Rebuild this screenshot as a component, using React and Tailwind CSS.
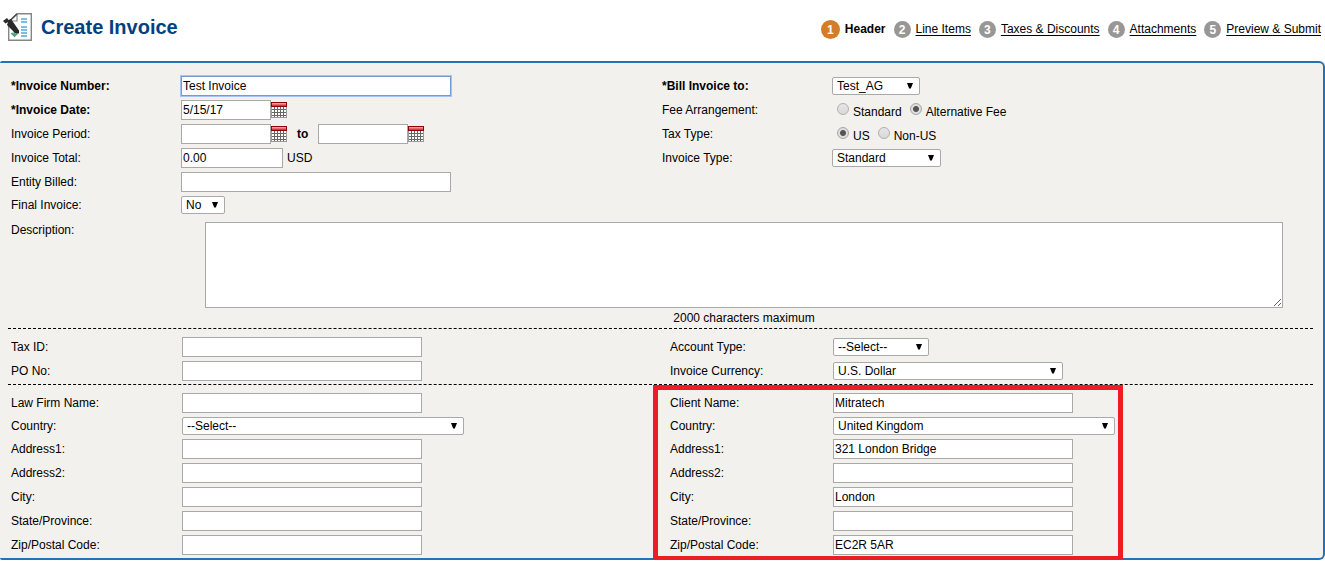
import React from "react";

const fieldBase =
  "block h-5 border bg-white px-px text-xs leading-4 text-black outline-none";

function Row({ id, label, bold, labelWidth = "w-[170px]", short, children }) {
  return (
    <div className={`flex items-center ${short ? "h-[18px]" : "h-5"}`}>
      <label
        htmlFor={id}
        className={`${labelWidth} shrink-0 ${bold ? "font-bold" : ""}`}
      >
        {label}
      </label>
      {children}
    </div>
  );
}

function TextField({ id, width = "w-60", value = "", active }) {
  return (
    <input
      id={id}
      type="text"
      defaultValue={value}
      className={`${fieldBase} ${width} ${
        active ? "border-[#7398dc] ring-1 ring-[#a6c4f5]" : "border-[#a9a9a9]"
      }`}
    />
  );
}

function Select({ id, width, value }) {
  return (
    <div className={`relative ${width}`}>
      <select
        id={id}
        defaultValue={value}
        className="block h-[18px] w-full appearance-none rounded-xs border border-[#a9a9a9] bg-white pr-4 pl-1 text-xs leading-4 text-black outline-none"
      >
        <option>{value}</option>
      </select>
      <svg
        viewBox="0 0 6 6"
        aria-hidden="true"
        className="pointer-events-none absolute top-1.5 right-[7px] size-1.5"
      >
        <path d="M0 0H6L3.8 5.6H2.2Z" fill="#000" />
      </svg>
    </div>
  );
}

function Radio({ name, label, checked }) {
  return (
    <label className="flex items-start gap-1 leading-6">
      <input
        type="radio"
        name={name}
        defaultChecked={checked}
        className="mt-[3px] size-3 appearance-none rounded-full border border-[#b0b0b0] bg-[linear-gradient(#e6e6e6,#d9d9d9)] checked:border-[#a5a5a5] checked:bg-[radial-gradient(circle,#555_0,#555_2.5px,#dedede_3.5px)]"
      />
      {label}
    </label>
  );
}

function CalendarButton({ label }) {
  return (
    <button type="button" aria-label={label} className="block size-4 shrink-0">
      <svg viewBox="0 0 16 16" className="size-4" shapeRendering="crispEdges">
        <rect width="16" height="16" fill="#999" />
        <rect x="1" y="5" width="14" height="10" fill="#fff" />
        <path
          d="M3.5 5V15M6.5 5V15M9.5 5V15M12.5 5V15M1 7.5H15M1 10.5H15M1 13.5H15"
          stroke="#666"
        />
        <rect width="16" height="5" fill="#900008" />
        <rect x="1" y="1" width="14" height="1" fill="#f59a9a" />
        <rect x="1" y="2" width="14" height="1" fill="#e86a6a" />
        <rect x="1" y="3" width="14" height="1" fill="#cf3b3e" />
      </svg>
    </button>
  );
}

function InvoiceIcon() {
  return (
    <svg viewBox="0 0 30 28" aria-hidden="true" className="h-7 w-[30px] shrink-0">
      <path d="M14 .7H28.3V27.3H5.7V9Z" fill="#fff" stroke="#858585" strokeWidth="1.4" />
      <path d="M14 1V8H8" fill="none" stroke="#888" strokeWidth="1.2" />
      <path d="M6 8.5L14 1" stroke="#444" strokeWidth="1.3" />
      <path
        d="M18 6H24M18 9H24M18 14H24M18 17H24M18 20H24M18 23H24"
        stroke="#83bddd"
        strokeWidth="2"
      />
      <path d="M11.500 17V23M8.500 20L11.500 23L14.500 20" fill="none" stroke="#4fa27d" strokeWidth="1.8" />
      <path d="M0 8L4 5L5.500 7L8 6L16 17.500V20.500L12 20L4 12L5 9L2.500 10.500Z" fill="#292929" />
    </svg>
  );
}

const steps = ["Header", "Line Items", "Taxes & Discounts", "Attachments", "Preview & Submit"];

function Steps() {
  return (
    <nav aria-label="Invoice steps">
      <ol className="flex items-center gap-2">
        {steps.map((step, i) => (
          <li key={step} className="flex items-center gap-[5px]">
            <span
              className={`flex items-center justify-center rounded-full font-bold text-white ${
                i === 0 ? "size-[19px] bg-[#d17d2a]" : "size-[17px] bg-[#999696]"
              }`}
            >
              {i + 1}
            </span>
            {i === 0 ? (
              <span aria-current="step" className="pb-0.5 font-bold">{step}</span>
            ) : (
              <a href="#" className="pb-0.5 underline underline-offset-2 [text-decoration-skip-ink:none]">{step}</a>
            )}
          </li>
        ))}
      </ol>
    </nav>
  );
}

function Address({ prefix, nameLabel, labelWidth, data = {} }) {
  return (
    <>
      <Row id={`${prefix}-name`} label={nameLabel} labelWidth={labelWidth}>
        <TextField id={`${prefix}-name`} value={data.name} />
      </Row>
      <Row id={`${prefix}-country`} label="Country:" labelWidth={labelWidth} short>
        <Select
          id={`${prefix}-country`}
          width="w-[282px]"
          value={data.country || "--Select--"}
        />
      </Row>
      {[
        ["address1", "Address1:"],
        ["address2", "Address2:"],
        ["city", "City:"],
        ["state", "State/Province:"],
        ["zip", "Zip/Postal Code:"],
      ].map(([key, label]) => (
        <Row key={key} id={`${prefix}-${key}`} label={label} labelWidth={labelWidth}>
          <TextField id={`${prefix}-${key}`} value={data[key]} />
        </Row>
      ))}
    </>
  );
}

const client = {
  name: "Mitratech",
  country: "United Kingdom",
  address1: "321 London Bridge",
  city: "London",
  zip: "EC2R 5AR",
};

export default function App() {
  return (
    <div className="bg-white font-['Liberation_Sans',Arial,sans-serif] text-xs leading-4 text-black">
      <header className="flex h-[61px] items-start justify-between pr-1 pl-[3px]">
        <div className="flex items-center gap-2 pt-[13px]">
          <InvoiceIcon />
          <h1 className="text-xl leading-7 font-bold text-[#00427f]">Create Invoice</h1>
        </div>
        <div className="pt-5">
          <Steps />
        </div>
      </header>

      <form className="rounded-l-xs rounded-r-md border-2 border-l-0 border-[#2272b9] bg-[#f3f1ee] pt-[13px] pr-2.5 pb-[3px] pl-2">
        <section className="pl-[3px]">
          <div className="grid grid-cols-2">
            <div className="flex flex-col gap-1">
              <Row id="number" label="*Invoice Number:" bold>
                <TextField id="number" width="w-[270px]" value="Test Invoice" active />
              </Row>
              <Row id="date" label="*Invoice Date:" bold>
                <TextField id="date" width="w-[90px]" value="5/15/17" />
                <CalendarButton label="Choose invoice date" />
              </Row>
              <Row id="from" label="Invoice Period:">
                <TextField id="from" width="w-[90px]" />
                <CalendarButton label="Choose period start" />
                <label htmlFor="to" className="px-2.5 font-bold">to</label>
                <TextField id="to" width="w-[90px]" />
                <CalendarButton label="Choose period end" />
              </Row>
              <Row id="total" label="Invoice Total:">
                <TextField id="total" width="w-[102px]" value="0.00" />
                <span className="pl-1">USD</span>
              </Row>
              <Row id="entity" label="Entity Billed:">
                <TextField id="entity" width="w-[270px]" />
              </Row>
              <Row id="final" label="Final Invoice:" short>
                <Select id="final" width="w-11" value="No" />
              </Row>
            </div>
            <div className="flex flex-col gap-1">
              <Row id="bill" label="*Bill Invoice to:" bold>
                <Select id="bill" width="w-[88px]" value="Test_AG" />
              </Row>
              <div role="radiogroup" aria-labelledby="fee-label" className="flex h-5 items-center">
                <span id="fee-label" className="w-[170px]">Fee Arrangement:</span>
                <div className="flex h-5 gap-2 pl-[5px]">
                  <Radio name="fee" label="Standard" />
                  <Radio name="fee" label="Alternative Fee" checked />
                </div>
              </div>
              <div role="radiogroup" aria-labelledby="tax-label" className="flex h-5 items-center">
                <span id="tax-label" className="w-[170px]">Tax Type:</span>
                <div className="flex h-5 gap-2 pl-[5px]">
                  <Radio name="tax" label="US" checked />
                  <Radio name="tax" label="Non-US" />
                </div>
              </div>
              <Row id="type" label="Invoice Type:">
                <Select id="type" width="w-[109px]" value="Standard" />
              </Row>
            </div>
          </div>
          <div className="flex items-start pt-2 pr-[30px]">
            <label htmlFor="description" className="w-[194px] shrink-0">Description:</label>
            <div className="flex-1">
              <textarea
                id="description"
                className="block h-[86px] w-full resize border border-[#a9a9a9] bg-white p-0.5 outline-none"
              />
              <p className="pt-0.5 pb-0.5 text-center">2000 characters maximum</p>
            </div>
          </div>
        </section>

        <section className="grid grid-cols-2 gap-x-4 gap-y-1 border-t border-dashed border-black pt-2 pb-[3px] pl-[3px]">
          <Row id="taxid" label="Tax ID:" labelWidth="w-[171px]">
            <TextField id="taxid" />
          </Row>
          <Row id="account" label="Account Type:" labelWidth="w-[163px]">
            <Select id="account" width="w-24" value="--Select--" />
          </Row>
          <Row id="po" label="PO No:" labelWidth="w-[171px]">
            <TextField id="po" />
          </Row>
          <Row id="currency" label="Invoice Currency:" labelWidth="w-[163px]">
            <Select id="currency" width="w-[230px]" value="U.S. Dollar" />
          </Row>
        </section>

        <section className="grid grid-cols-2 gap-x-4 border-t border-dashed border-black pt-2 pl-[3px]">
          <div className="flex flex-col gap-1">
            <Address prefix="firm" nameLabel="Law Firm Name:" labelWidth="w-[171px]" />
          </div>
          <div className="relative flex flex-col gap-1">
            <div
              aria-hidden="true"
              className="pointer-events-none absolute -top-2 -bottom-1.5 -left-[17px] w-[470px] border-5 border-[#ee1c25]"
            />
            <Address prefix="client" nameLabel="Client Name:" labelWidth="w-[163px]" data={client} />
          </div>
        </section>
      </form>
    </div>
  );
}
